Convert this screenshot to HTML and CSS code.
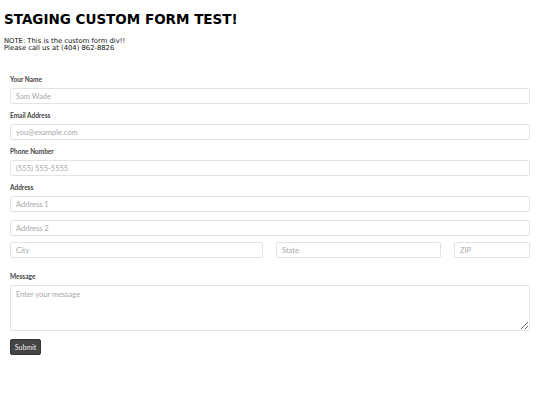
FILE: index.html
```html
<!DOCTYPE html>
<html>
<head>
<meta charset="utf-8">
<link rel="stylesheet" href="styles.css">
</head>
<body>
<h1 class="title">STAGING CUSTOM FORM TEST!</h1>
<div class="note">NOTE: This is the custom form div!!<br>Please call us at (404) 862-8826</div>
<form class="form">
  <div class="group">
    <label class="label">Your Name</label>
    <input class="input" type="text" placeholder="Sam Wade">
  </div>
  <div class="group">
    <label class="label">Email Address</label>
    <input class="input" type="text" placeholder="you@example.com">
  </div>
  <div class="group">
    <label class="label">Phone Number</label>
    <input class="input" type="text" placeholder="(555) 555-5555">
  </div>
  <div class="group">
    <label class="label">Address</label>
    <input class="input" type="text" placeholder="Address 1">
    <input class="input spaced" type="text" placeholder="Address 2">
    <div class="row">
      <input class="input" type="text" placeholder="City">
      <input class="input" type="text" placeholder="State">
      <input class="input" type="text" placeholder="ZIP">
    </div>
  </div>
  <div class="group message">
    <label class="label">Message</label>
    <textarea class="textarea" placeholder="Enter your message"></textarea>
  </div>
  <button class="submit" type="button">Submit</button>
</form>
</body>
</html>
```
FILE: styles.css
```css
* { box-sizing: border-box; }
body {
  margin: 0;
  padding: 4px;
  background: #fff;
  color: #111;
}
.title {
  font-family: "DejaVu Sans", sans-serif;
  font-weight: bold;
  font-size: 13.5px;
  line-height: 18px;
  margin: 6px 0 10px 0;
  color: #000;
}
.note {
  font-family: "DejaVu Sans", sans-serif;
  font-size: 6.8px;
  line-height: 7px;
  color: #111;
  margin-bottom: 23px;
}
.form {
  padding: 0 6px;
  font-family: Lato, "Open Sans", sans-serif;
}
.group {
  display: flex;
  flex-direction: column;
  margin-bottom: 7px;
}
.label {
  font-size: 6.5px;
  font-weight: bold;
  line-height: 9px;
  color: #444;
  margin-bottom: 4px;
}
.input, .textarea {
  display: block;
  width: 100%;
  height: 16px;
  border: 1px solid #e2e2e2;
  border-radius: 2px;
  padding: 0 5px;
  font-family: Lato, "Open Sans", sans-serif;
  font-size: 7.5px;
  color: #333;
  background: #fff;
  outline: none;
}
.input::placeholder, .textarea::placeholder { color: #a8a8a8; }
.spaced { margin-top: 8px; }
.row {
  display: grid;
  grid-template-columns: 253fr 165fr 76fr;
  column-gap: 13px;
  margin-top: 6px;
  margin-bottom: 7px;
}
.message { margin-bottom: 8px; }
.textarea {
  height: 46px;
  padding: 4px 5px;
  resize: vertical;
}
.submit {
  display: block;
  height: 16px;
  width: 31px;
  padding: 0;
  border: 1px solid #333;
  border-radius: 2px;
  background: #444;
  color: #eee;
  font-family: Lato, "Open Sans", sans-serif;
  font-size: 7px;
}
```
